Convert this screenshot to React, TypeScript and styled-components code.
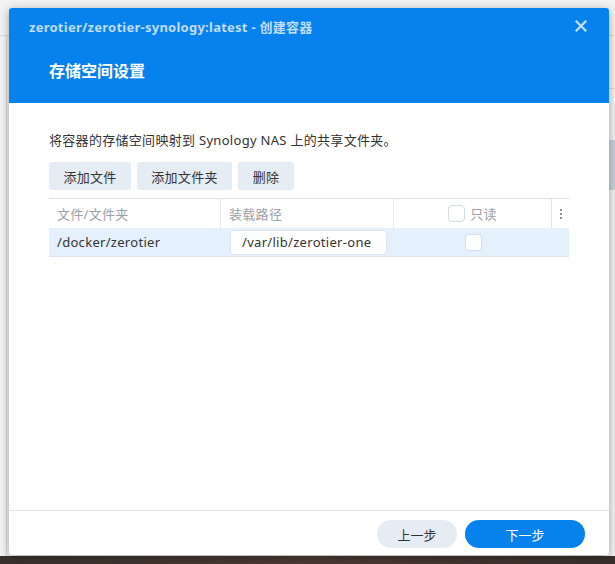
import React from "react";
import styled, { createGlobalStyle } from "styled-components";

const Global = createGlobalStyle`
  html, body { margin: 0; padding: 0; }
  body {
    width: 615px;
    height: 564px;
    overflow: hidden;
    font-family: "Noto Sans", "Noto Sans CJK SC", sans-serif;
    background: #f1f1f1;
  }
  * { box-sizing: border-box; }
`;

const Desktop = styled.div`
  position: relative;
  width: 615px;
  height: 564px;
  background:
    linear-gradient(#dcdcdc, #dcdcdc) 0 35px / 100% 1px no-repeat,
    linear-gradient(#dcdcdc, #dcdcdc) 608px 88px / 7px 1px no-repeat,
    linear-gradient(#c9d1da, #c9d1da) 608px 140px / 7px 50px no-repeat,
    linear-gradient(#dadada, #dadada) 6px 35px / 1px 530px no-repeat,
    #f3f3f3;
  padding: 8px 0 0 9px;
  &::after {
    content: "";
    position: absolute;
    left: 0;
    right: 0;
    bottom: 0;
    height: 8px;
    background: linear-gradient(90deg, #3a302c, #4a3a34 50%, #3a2f2b);
  }
`;

const Dialog = styled.div`
  position: relative;
  z-index: 1;
  width: 600px;
  height: 547px;
  background: #fff;
  border-radius: 3px;
  box-shadow: 0 2px 10px rgba(0, 0, 0, 0.35);
  display: flex;
  flex-direction: column;
  overflow: hidden;
`;

const Header = styled.div`
  height: 95px;
  background: #0782ed;
  display: flex;
  flex-direction: column;
  padding: 0 0 0 20px;
`;

const TitleBar = styled.div`
  height: 38px;
  display: flex;
  align-items: center;
  justify-content: space-between;
  padding-right: 22px;
  padding-bottom: 2px;
`;

const Title = styled.div`
  color: #bfdcfa;
  font-size: 13px;
  font-weight: 700;
  letter-spacing: 0.25px;
`;

const Close = styled.div`
  width: 12px;
  height: 12px;
  display: flex;
  svg { display: block; }
`;

const Subtitle = styled.div`
  color: #ffffff;
  font-size: 16px;
  font-weight: 700;
  padding-left: 20px;
  margin-top: 12px;
`;

const Body = styled.div`
  flex: 1;
  padding: 28px 40px 0 40px;
  display: flex;
  flex-direction: column;
  letter-spacing: 0.3px;
`;

const Desc = styled.div`
  font-size: 13px;
  color: #333;
  line-height: 18px;
`;

const Toolbar = styled.div`
  display: flex;
  gap: 6px;
  margin-top: 13px;
`;

const ToolButton = styled.button<{ $w: number }>`
  width: ${(p) => p.$w}px;
  height: 28px;
  border: none;
  border-radius: 3px;
  background: #e6ecf3;
  color: #333;
  font-family: inherit;
  font-size: 13px;
  letter-spacing: 0.3px;
  padding: 0;
`;

const Table = styled.div`
  margin-top: 8px;
  width: 520px;
  border-top: 1px solid #dde4eb;
`;

const Row = styled.div<{ $selected?: boolean }>`
  display: grid;
  grid-template-columns: 172px 173px 158px 17px;
  grid-template-rows: 1fr;
  height: 29px;
  background: ${(p) => (p.$selected ? "#e4f0fb" : "#fff")};
  border-bottom: ${(p) => (p.$selected ? "1px solid #dde4eb" : "none")};
`;

const HeadCell = styled.div<{ $center?: boolean; $last?: boolean }>`
  display: flex;
  align-items: center;
  justify-content: ${(p) => (p.$center ? "center" : "flex-start")};
  padding-left: ${(p) => (p.$center ? 0 : 8)}px;
  color: #9aa1a9;
  font-size: 13px;
  border-right: ${(p) => (p.$last ? "none" : "1px solid #e3e8ee")};
  gap: 5px;
  min-height: 0;
`;

const Cell = styled.div<{ $center?: boolean; $pad?: number }>`
  display: flex;
  align-items: center;
  justify-content: ${(p) => (p.$center ? "center" : "flex-start")};
  padding-left: ${(p) => p.$pad ?? 0}px;
  color: #333;
  font-size: 13px;
  min-height: 0;
`;

const PathInput = styled.div`
  width: 157px;
  height: 25px;
  background: #fff;
  border: 1px solid #dfe4ea;
  border-radius: 4px;
  display: flex;
  align-items: center;
  padding-left: 11px;
  font-size: 13px;
  color: #333;
  white-space: nowrap;
  overflow: hidden;
`;

const Check = styled.span`
  width: 17px;
  height: 17px;
  border: 1px solid #d3dce5;
  border-radius: 4px;
  background: #fff;
  display: inline-block;
  flex: none;
`;

const Dots = styled.div`
  display: flex;
  flex-direction: column;
  align-items: center;
  justify-content: center;
  gap: 2px;
  span {
    width: 2px;
    height: 2px;
    background: #8a9199;
  }
`;

const Footer = styled.div`
  height: 45px;
  border-top: 1px solid #dfe6ed;
  display: flex;
  align-items: flex-start;
  justify-content: flex-end;
  gap: 8px;
  padding: 9px 24px 0 0;
`;

const FootButton = styled.button<{ $primary?: boolean; $w: number }>`
  width: ${(p) => p.$w}px;
  height: 28px;
  border: none;
  border-radius: 14px;
  padding: 0;
  font-family: inherit;
  font-size: 13px;
  background: ${(p) => (p.$primary ? "#0782ed" : "#e6ecf3")};
  color: ${(p) => (p.$primary ? "#fff" : "#333")};
`;

export default function App() {
  return (
    <>
      <Global />
      <Desktop>
        <Dialog>
          <Header>
            <TitleBar>
              <Title>zerotier/zerotier-synology:latest - 创建容器</Title>
              <Close>
                <svg width="12" height="12" viewBox="0 0 12 12">
                  <path d="M1.5 1.5 L10.5 10.5 M10.5 1.5 L1.5 10.5" stroke="#c6e0fb" strokeWidth="2.2" strokeLinecap="square" />
                </svg>
              </Close>
            </TitleBar>
            <Subtitle>存储空间设置</Subtitle>
          </Header>
          <Body>
            <Desc>将容器的存储空间映射到 Synology NAS 上的共享文件夹。</Desc>
            <Toolbar>
              <ToolButton $w={82}>添加文件</ToolButton>
              <ToolButton $w={95}>添加文件夹</ToolButton>
              <ToolButton $w={56}>删除</ToolButton>
            </Toolbar>
            <Table>
              <Row>
                <HeadCell>文件/文件夹</HeadCell>
                <HeadCell>装载路径</HeadCell>
                <HeadCell $center>
                  <Check />
                  只读
                </HeadCell>
                <HeadCell $center $last>
                  <Dots>
                    <span />
                    <span />
                    <span />
                  </Dots>
                </HeadCell>
              </Row>
              <Row $selected>
                <Cell $pad={8}>/docker/zerotier</Cell>
                <Cell $pad={9}>
                  <PathInput>/var/lib/zerotier-one</PathInput>
                </Cell>
                <Cell $center>
                  <Check />
                </Cell>
                <Cell />
              </Row>
            </Table>
          </Body>
          <Footer>
            <FootButton $w={80}>上一步</FootButton>
            <FootButton $primary $w={120}>下一步</FootButton>
          </Footer>
        </Dialog>
      </Desktop>
    </>
  );
}
